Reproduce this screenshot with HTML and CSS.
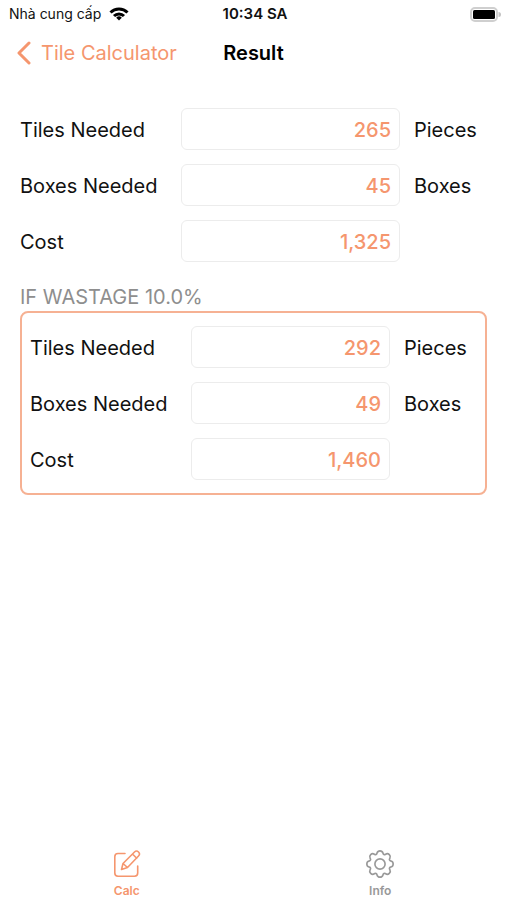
FILE: index.html
```html
<!DOCTYPE html>
<html lang="en">
<head>
    <meta charset="UTF-8">
    <meta name="viewport" content="width=device-width, initial-scale=1.0">
    <title>Tile Calculator</title>
    <link rel="stylesheet" href="styles.css">
</head>
<body>
    <div class="status-bar">
        <div class="carrier">
            <span lang="vi">Nhà cung cấp</span>
            <svg class="wifi" viewBox="0 0 20 14" fill="none" stroke="#000" stroke-width="3">
                <path d="M1.5 5.5a12 12 0 0 1 17 0"/>
                <path d="M5 9a7 7 0 0 1 10 0"/>
                <path d="M10 13.5L7.2 10.7a4 4 0 0 1 5.6 0z" fill="#000" stroke="none"/>
            </svg>
        </div>
        <time class="clock">10:34 SA</time>
        <svg class="battery" viewBox="0 0 31 15">
            <rect x="1" y="1" width="26" height="13" rx="4" fill="#fff" stroke="#cfcfcf" stroke-width="2"/>
            <rect x="3" y="3" width="22" height="9" rx="1.5" fill="#000"/>
            <path d="M28.5 5a2.5 2.5 0 0 1 0 5z" fill="#c4c4c4"/>
        </svg>
    </div>

    <header class="nav-bar">
        <a class="back" href="#">
            <svg class="chevron" viewBox="0 0 14 24" fill="none" stroke="currentColor" stroke-width="3" stroke-linecap="round" stroke-linejoin="round">
                <path d="M12 2L2 12l10 10"/>
            </svg>
            Tile Calculator
        </a>
        <h1>Result</h1>
    </header>

    <main>
        <div class="rows">
            <div class="row">
                <label for="tiles">Tiles Needed</label>
                <input type="text" id="tiles" value="265" readonly>
                <span>Pieces</span>
            </div>
            <div class="row">
                <label for="boxes">Boxes Needed</label>
                <input type="text" id="boxes" value="45" readonly>
                <span>Boxes</span>
            </div>
            <div class="row">
                <label for="cost">Cost</label>
                <input type="text" id="cost" value="1,325" readonly>
            </div>
        </div>

        <h2>IF WASTAGE 10.0%</h2>
        <div class="rows wastage">
            <div class="row">
                <label for="waste-tiles">Tiles Needed</label>
                <input type="text" id="waste-tiles" value="292" readonly>
                <span>Pieces</span>
            </div>
            <div class="row">
                <label for="waste-boxes">Boxes Needed</label>
                <input type="text" id="waste-boxes" value="49" readonly>
                <span>Boxes</span>
            </div>
            <div class="row">
                <label for="waste-cost">Cost</label>
                <input type="text" id="waste-cost" value="1,460" readonly>
            </div>
        </div>
    </main>

    <nav class="tab-bar">
        <a class="tab active" href="#">
            <svg viewBox="0 0 28 28" fill="none" stroke="currentColor" stroke-width="1.6" stroke-linecap="round" stroke-linejoin="round">
                <path d="M12 3.500H5A3.200 3.200 0 0 0 1.800 6.700V23A3.200 3.200 0 0 0 5 26.200H21.500A3.200 3.200 0 0 0 24.700 23V16"/>
                <path d="M8.500 19.500l1.500-6L21.500 2a2.800 2.800 0 0 1 4 4L14.500 17.500zM10 13.500l4.500 4M19.500 4l4.200 4.200"/>
            </svg>
            Calc
        </a>
        <a class="tab" href="#">
            <svg viewBox="-0.5 -0.5 17 17" fill="none" stroke="currentColor">
                <circle cx="8" cy="8" r="3.1"/>
                <path d="M9.796 1.343c-.527-1.790-3.065-1.790-3.592 0l-.094.319a.873.873 0 0 1-1.255.52l-.292-.16c-1.640-.892-3.433.902-2.540 2.541l.159.292a.873.873 0 0 1-.52 1.255l-.319.094c-1.790.527-1.790 3.065 0 3.592l.319.094a.873.873 0 0 1 .52 1.255l-.16.292c-.892 1.640.901 3.434 2.541 2.540l.292-.159a.873.873 0 0 1 1.255.52l.094.319c.527 1.790 3.065 1.790 3.592 0l.094-.319a.873.873 0 0 1 1.255-.52l.292.16c1.640.893 3.434-.902 2.540-2.541l-.159-.292a.873.873 0 0 1 .52-1.255l.319-.094c1.790-.527 1.790-3.065 0-3.592l-.319-.094a.873.873 0 0 1-.52-1.255l.16-.292c.893-1.640-.902-3.433-2.541-2.540l-.292.159a.873.873 0 0 1-1.255-.52z"/>
            </svg>
            Info
        </a>
    </nav>
</body>
</html>
```

FILE: styles.css
```css
* {
    box-sizing: border-box;
}
body {
    display: flex;
    flex-direction: column;
    min-height: 100vh;
    margin: 0;
    background: #fff;
    color: #111;
    font-family: Inter, 'Helvetica Neue', Arial, sans-serif;
    font-size: 20px;
    line-height: 24px;
}
a {
    color: inherit;
    text-decoration: none;
}
h1, h2 {
    margin: 0;
    font-size: 20px;
}

/* status bar */
.status-bar {
    display: grid;
    grid-template-columns: 1fr auto 1fr;
    align-items: center;
    height: 28px;
    padding: 0 6px 0 9px;
    font-size: 14px;
}
.carrier {
    display: flex;
    align-items: center;
    gap: 8px;
}
.wifi {
    width: 20px;
    height: 14px;
}
.clock {
    font-size: 15px;
    font-weight: 600;
}
.battery {
    justify-self: end;
    width: 31px;
    height: 15px;
}

/* navigation bar */
.nav-bar {
    display: grid;
    grid-template-columns: 1fr auto 1fr;
    align-items: center;
    height: 49px;
    padding: 0 17px;
}
.back {
    display: flex;
    align-items: center;
    gap: 10px;
    color: #f5966e;
}
.chevron {
    width: 14px;
    height: 24px;
}
.nav-bar h1 {
    color: #000;
    font-weight: 600;
}

/* results */
main {
    flex: 1;
    padding: 31px 20px;
}
.rows {
    display: grid;
    gap: 14px;
}
.row {
    display: grid;
    grid-template-columns: 147px 1fr 73px;
    gap: 14px;
    align-items: center;
}
.row label,
.row span {
    padding-top: 2px;
}
.row input {
    width: 100%;
    min-width: 0;
    height: 42px;
    padding: 2px 8px 0;
    border: 1px solid #ececec;
    border-radius: 6px;
    outline: none;
    background: #fff;
    color: #f5966e;
    font: inherit;
    font-weight: 500;
    text-align: right;
}
h2 {
    margin: 23px 0 2px;
    color: #8e8e8e;
    font-weight: 400;
}
.wastage {
    padding: 13px 8px;
    border: 2px solid #f6b193;
    border-radius: 8px;
}

/* tab bar */
.tab-bar {
    display: grid;
    grid-template-columns: 1fr 1fr;
    padding-bottom: 1px;
}
.tab {
    display: flex;
    flex-direction: column;
    align-items: center;
    color: #999;
    font-size: 12px;
    font-weight: 600;
    line-height: 16px;
    gap: 5px;
}
.tab svg {
    width: 28px;
    height: 28px;
}
.tab.active {
    color: #f5966e;
}
```
